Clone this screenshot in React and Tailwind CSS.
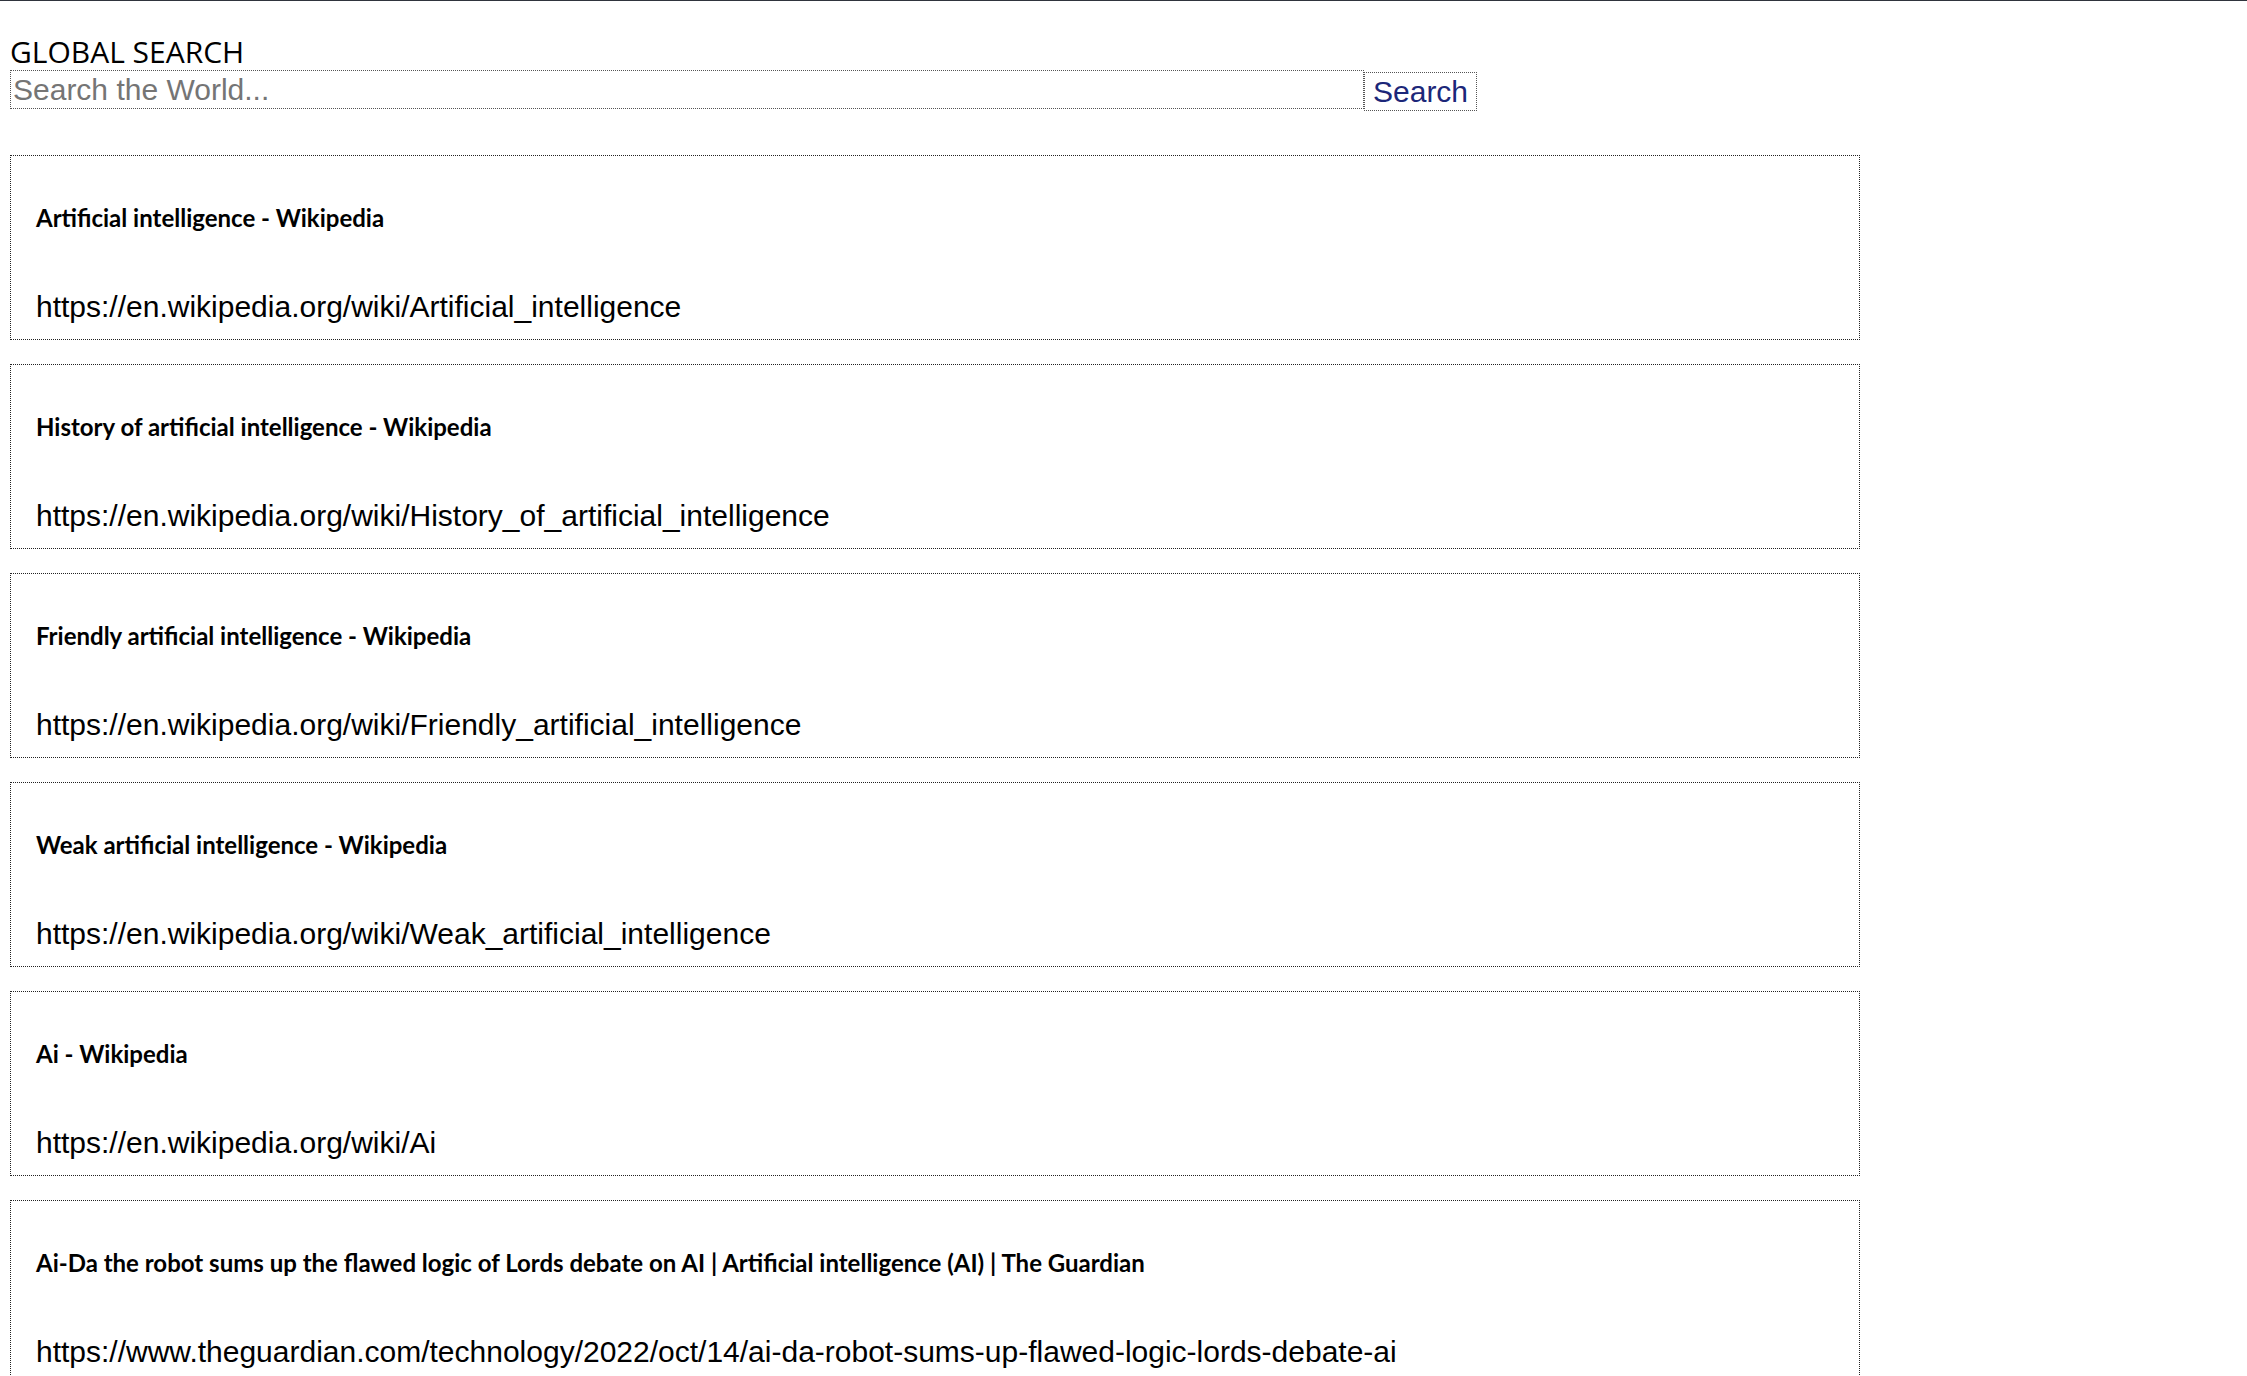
import { useState } from 'react'

const results = [
  { title: 'Artificial intelligence - Wikipedia', url: 'https://en.wikipedia.org/wiki/Artificial_intelligence' },
  { title: 'History of artificial intelligence - Wikipedia', url: 'https://en.wikipedia.org/wiki/History_of_artificial_intelligence' },
  { title: 'Friendly artificial intelligence - Wikipedia', url: 'https://en.wikipedia.org/wiki/Friendly_artificial_intelligence' },
  { title: 'Weak artificial intelligence - Wikipedia', url: 'https://en.wikipedia.org/wiki/Weak_artificial_intelligence' },
  { title: 'Ai - Wikipedia', url: 'https://en.wikipedia.org/wiki/Ai' },
  {
    title: 'Ai-Da the robot sums up the flawed logic of Lords debate on AI | Artificial intelligence (AI) | The Guardian',
    url: 'https://www.theguardian.com/technology/2022/oct/14/ai-da-robot-sums-up-flawed-logic-lords-debate-ai',
  },
  { title: 'What is Artificial Intelligence (AI)? | IBM', url: 'https://www.ibm.com/topics/artificial-intelligence' },
  { title: 'Artificial intelligence | Definition, Examples, Types | Britannica', url: 'https://www.britannica.com/technology/artificial-intelligence' },
  { title: 'Artificial general intelligence - Wikipedia', url: 'https://en.wikipedia.org/wiki/Artificial_general_intelligence' },
  { title: 'Ethics of artificial intelligence - Wikipedia', url: 'https://en.wikipedia.org/wiki/Ethics_of_artificial_intelligence' },
]

function ResultCard({ title, url }) {
  return (
    <div className="w-[1850px] mb-[24px] border border-dotted border-[#222] bg-white pl-[25px] pt-[47px] pb-[15px]">
      <h3 className="font-['Lato',sans-serif] font-bold text-[24px] leading-[29px] text-black">{title}</h3>
      <p className="mt-[58px] font-['Liberation_Sans',Arial,sans-serif] text-[30px] leading-[34px] text-black">{url}</p>
    </div>
  )
}

export default function App() {
  const [query, setQuery] = useState('')

  return (
    <div className="h-screen overflow-y-scroll bg-white border-t border-[#2f343d] [&::-webkit-scrollbar]:w-[15px] [&::-webkit-scrollbar-track]:bg-[#f1f1f1] [&::-webkit-scrollbar-thumb]:bg-[#c1c1c1] [&::-webkit-scrollbar-thumb]:border-x-[2px] [&::-webkit-scrollbar-thumb]:border-solid [&::-webkit-scrollbar-thumb]:border-[#f1f1f1]">
      <div className="px-[10px] pt-[33px] pb-[40px]">
        <h1 className="font-['Open_Sans',sans-serif] text-[30px] leading-[36px] font-normal text-black">GLOBAL SEARCH</h1>

        <div className="flex items-start">
          <input
            value={query}
            onChange={(e) => setQuery(e.target.value)}
            placeholder="Search the World..."
            className="w-[1354px] h-[39px] border border-dotted border-[#555] px-[2px] py-0 font-['Liberation_Sans',Arial,sans-serif] text-[30px] leading-[34px] text-black placeholder:text-[#757575] outline-none"
          />
          <button className="mt-[2px] h-[39px] w-[113px] border border-dotted border-[#555] bg-white px-[8px] font-['Liberation_Sans',Arial,sans-serif] text-[30px] leading-[34px] text-[#1c2779]">
            Search
          </button>
        </div>

        <div className="mt-[44px]">
          {results.map((r) => (
            <ResultCard key={r.url} title={r.title} url={r.url} />
          ))}
        </div>
      </div>
    </div>
  )
}
